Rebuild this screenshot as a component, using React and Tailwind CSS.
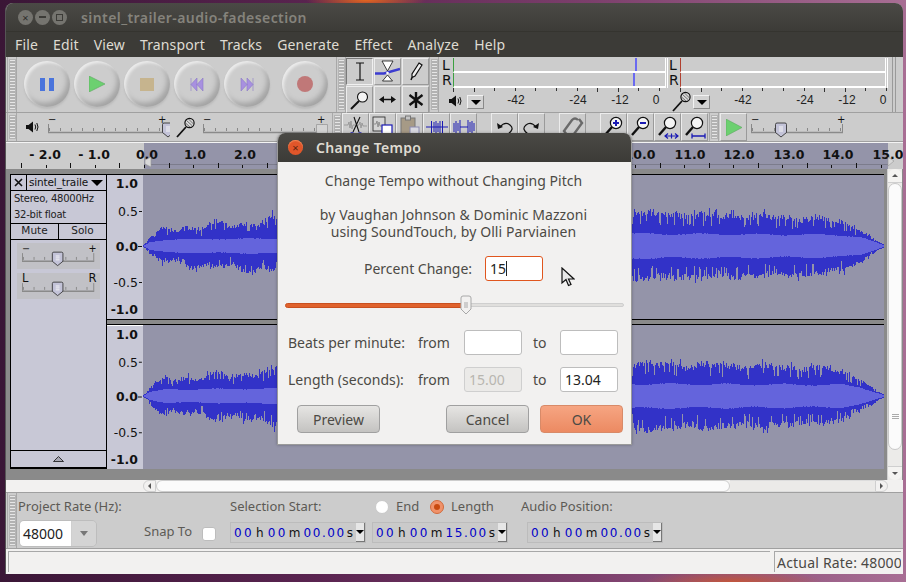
import React from 'react';

const MENUS = ['File', 'Edit', 'View', 'Transport', 'Tracks', 'Generate', 'Effect', 'Analyze', 'Help'];

// amplitude envelopes, x is in track pixels (0 = left edge of wave area)
const OUTER = [[0, 0], [6, 10], [22, 22], [60, 25], [100, 29], [130, 31], [210, 34], [480, 37], [560, 35], [660, 32], [698, 28], [718, 17], [740, 1]];
const INNER = [[0, 0], [6, 4], [22, 7], [130, 8], [210, 12], [490, 13], [698, 12], [718, 9], [740, 1]];

function lerp(pts, x) {
  for (let i = 1; i < pts.length; i++) {
    if (x <= pts[i][0]) {
      const [x0, y0] = pts[i - 1];
      const [x1, y1] = pts[i];
      return y0 + ((y1 - y0) * (x - x0)) / (x1 - x0);
    }
  }
  return 0;
}

function wavePaths(seed) {
  let s = seed;
  const rnd = () => {
    s = (s * 16807) % 2147483647;
    return s / 2147483647;
  };
  const side = (o, x, phase) => {
    const slow = 0.5 + 0.5 * Math.sin(x / 6 + phase) * Math.sin(x / 19 + phase * 2);
    const weight = x < 140 ? 0.35 : 0.14;
    let v = o * (0.84 - weight + weight * slow + rnd() * 0.2);
    const r = rnd();
    if (r > 0.92) v *= 1.13;
    else if (r < 0.14) v *= 0.7;
    return v;
  };
  let outer = '';
  let inner = '';
  for (let x = 0; x < 741; x++) {
    const o = lerp(OUTER, x);
    const i = lerp(INNER, x);
    const slowI = 0.93 + 0.07 * Math.sin(x / 9 + seed);
    const iu = i * slowI * (0.97 + rnd() * 0.06);
    const id = i * slowI * (0.97 + rnd() * 0.06);
    const up = Math.max(side(o, x, seed % 7), iu + 1);
    const down = Math.max(side(o, x, seed % 5 + 2), id + 1);
    outer += `M${x + 0.5} ${71 - up}V${71 + down}`;
    inner += `M${x + 0.5} ${71 - iu}V${71 + id}`;
  }
  return { outer, inner };
}

function Gripper({ className = '' }) {
  return (
    <div className={`w-[10px] shrink-0 flex justify-center py-[2px] bg-[#cccccc] border-r border-[#a8a8a8] border-l ${className}`}>
      <div className="w-[7px] h-full border border-[#b4b4b4] bg-[repeating-linear-gradient(to_bottom,#e6e6e6_0px,#e6e6e6_1px,#b2b2b2_1px,#b2b2b2_3px)]" />
    </div>
  );
}

function RoundBtn({ className = '', children }) {
  return (
    <div className={`w-[46px] h-[46px] rounded-full shrink-0 flex items-center justify-center bg-[#cdcdcd] shadow-[inset_2px_2px_3px_#ececec,inset_-3px_-4px_5px_#a4a4a4,0_2px_2px_#bbbbbb] ${className}`}>
      {children}
    </div>
  );
}

function Tool({ active, className = '', children }) {
  return (
    <div className={`w-[27px] h-[27px] flex items-center justify-center border overflow-hidden ${active ? 'border-t-[#7a7a7a] border-l-[#7a7a7a] border-r-[#f0f0f0] border-b-[#f0f0f0]' : 'border-t-[#ececec] border-l-[#ececec] border-r-[#9a9a9a] border-b-[#9a9a9a]'} ${className}`}>
      {children}
    </div>
  );
}

function Speaker({ className = '' }) {
  return (
    <svg width="14" height="14" viewBox="0 0 14 14" className={className}>
      <path d="M1 5h2.500L8 1.500v11L3.500 9H1z" fill="#111" />
      <path d="M10 4.500q1.500 2.500 0 5M11.800 3q2.400 4 0 8" fill="none" stroke="#111" strokeWidth="1" />
    </svg>
  );
}

function Mic({ className = '' }) {
  return (
    <svg width="20" height="21" viewBox="0 0 20 21" className={className}>
      <path d="M1 20L10 10" stroke="#111" strokeWidth="1.800" />
      <circle cx="13.500" cy="6" r="4.600" fill="#d8d8d8" stroke="#111" strokeWidth="1.200" />
      <path d="M10.500 3.500l5.500 5M12.500 2l5 5M9.500 6l4.500 4" stroke="#555" strokeWidth="0.800" />
    </svg>
  );
}

function Magnifier({ mark, under }) {
  return (
    <svg width="24" height="24" viewBox="0 0 24 24">
      <path d="M3 20L10 12" stroke="#111" strokeWidth="2.400" />
      <circle cx="14" cy="8" r="5.600" fill="#f4f4f4" stroke="#111" strokeWidth="1.200" />
      {mark === '+' && <path d="M11 8h6M14 5v6" stroke="#1a1ab4" strokeWidth="2" />}
      {mark === '-' && <path d="M11 8h6" stroke="#1a1ab4" strokeWidth="2" />}
      {under === 'fit' && <path d="M9 21h13M12 18.500L9 21l3 2.500M19 18.500l3 2.500-3 2.500M15.500 18.500v5" fill="none" stroke="#1a1ab4" strokeWidth="1.200" />}
      {under === 'project' && <path d="M9 21h13M9 18.500v5M22 18.500v5" fill="none" stroke="#1a1ab4" strokeWidth="1.300" />}
    </svg>
  );
}

function Slider({ width, thumb, dim, left = '−', right = '+', bold }) {
  const ticks = [];
  for (let x = 1; x < width - 1; x += 11) ticks.push(x);
  return (
    <svg width={width + 6} height="30" viewBox={`0 0 ${width + 6} 30`} className="block">
      <g transform="translate(0 3)">
        <text x="0" y="8" fontSize={bold ? 12 : 10} fill="#111" fontFamily="DejaVu Sans">{left}</text>
        <text x={width - 6} y="8" fontSize={bold ? 12 : 10} fill="#111" fontFamily="DejaVu Sans">{right}</text>
        <path d={`M0.500 9v8M${width - 0.5} 9v8`} stroke="#888" strokeWidth="1" />
        {ticks.map(x => <path key={x} d={`M${x + 0.5} 13v3`} stroke="#888" strokeWidth="1" />)}
        <path d={`M0 17.500H${width}`} stroke="#8a8a8a" strokeWidth="1.400" />
        {!dim && <path d={`M${thumb - 5.5} 9.500q0-1.500 1.500-1.500h8q1.500 0 1.500 1.500v8l-5.500 4.500-5.500-4.500z`} fill="#c3c3d8" stroke="#222" strokeWidth="0.800" />}
        {!dim && <path d={`M${thumb - 2} 12h4M${thumb - 2} 14h4M${thumb - 2} 16h4`} stroke="#f4f4f4" strokeWidth="1" />}
        {dim && <path d={`M${thumb - 5.5} 9.500h11v8l-5.500 4.500-5.500-4.500z`} fill="#d4d4d4" stroke="#999" strokeWidth="0.800" />}
      </g>
    </svg>
  );
}

function MeterBar({ label, lineColor, marker }) {
  return (
    <div className="h-[15px] flex">
      <div className="w-[12px] text-[14px] leading-[14px] text-[#111] font-['DejaVu_Sans'] pl-[1px]">{label}</div>
      <div className="flex-1 relative border-b-2 border-white border-l-[1.5px]" style={{ borderLeftColor: lineColor }}>
        {marker != null && <div className="absolute top-0 bottom-0 w-[2px] bg-[#6a6af0]" style={{ left: marker }} />}
      </div>
      <div className="w-[3px] border-x border-white" />
    </div>
  );
}

function MeterScale({ labels, width }) {
  const ticks = [];
  for (let x = 0; x <= 10; x++) ticks.push(Math.round((x * (width - 1)) / 10));
  return (
    <svg width={width} height="24" viewBox={`0 0 ${width} 24`} className="block absolute left-[12px] top-0">
      {ticks.map(x => <path key={x} d={`M${x + 0.5} 0v${x % 3 === 0 ? 4 : 3}`} stroke="#333" strokeWidth="1" />)}
      {labels.map(([t, x]) => (
        <text key={t} x={x} y="16" textAnchor="middle" fontSize="12" fill="#222" fontFamily="Liberation Sans">{t}</text>
      ))}
    </svg>
  );
}

function DropBtn({ className = '' }) {
  return (
    <div className={`w-[17px] h-[14px] flex items-center justify-center bg-[#d2d2d2] border border-t-[#f2f2f2] border-l-[#f2f2f2] border-r-[#8a8a8a] border-b-[#8a8a8a] ${className}`}>
      <div className="w-0 h-0 border-x-[5px] border-x-transparent border-t-[5px] border-t-black" />
    </div>
  );
}

function TimeBox({ value }) {
  const [h, m, s] = value;
  return (
    <div className="w-[136px] h-[21px] shrink-0 flex items-center border border-[#bcbcbc] bg-[#cacaca] pl-[3px] font-['DejaVu_Sans'] text-[12px] text-[#111] whitespace-nowrap">
      <span className="text-[#0000c8] tracking-[2.4px]">{h}</span><span className="ml-[2px] mr-[4px]">h</span>
      <span className="text-[#0000c8] tracking-[2.4px]">{m}</span><span className="ml-[1px] mr-[3px]">m</span>
      <span className="text-[#0000c8] tracking-[1.6px]">{s}</span><span className="ml-[1px]">s</span>
      <div className="ml-auto w-[9px] h-[19px] bg-[#e6e6e6] border-r border-b border-[#777] flex items-center justify-center">
        <div className="w-0 h-0 border-x-[4px] border-x-transparent border-t-[4px] border-t-black" />
      </div>
    </div>
  );
}

function VRuler({ topLine }) {
  const items = [['1.0', 13, true], ['0.5', 41, false], ['0.0', 76, true], ['-0.5', 112, false], ['-1.0', 139, true]];
  return (
    <svg width="36" height="144" viewBox="0 0 36 144" className={`block shrink-0 bg-[#c8c8d6] ${topLine ? 'border-t border-white' : ''}`}>
      {items.map(([t, y, b]) => (
        <text key={t} x="31" y={y} textAnchor="end" fontSize="12.500" fontWeight={b ? 700 : 400} fill="#111" fontFamily="DejaVu Sans">{t}</text>
      ))}
      <path d="M32 36.500h3M31 71.500h4M32 107.500h3" stroke="#111" strokeWidth="1" />
    </svg>
  );
}

function Wave({ seed }) {
  const { outer, inner } = wavePaths(seed);
  return (
    <svg width="741" height="144" viewBox="0 0 741 144" className="block flex-1 bg-[#9494a9]" shapeRendering="crispEdges">
      <path d={outer} stroke="#3232c8" strokeWidth="1" fill="none" />
      <path d={inner} stroke="#6464dc" strokeWidth="1" fill="none" />
    </svg>
  );
}

function TopRuler() {
  const labels = [['- 2.0', 45], ['- 1.0', 94], ['0.0', 147], ['1.0', 195], ['2.0', 245], ['10.0', 640], ['11.0', 690], ['12.0', 739], ['13.0', 789], ['14.0', 838], ['15.0', 888]];
  const ticks = [];
  for (let i = -5; i <= 31; i++) ticks.push(Math.round(144 + i * 24.55));
  return (
    <svg width="898" height="27" viewBox="0 0 898 27" className="block">
      <rect x="0" y="0" width="898" height="27" fill="#cccccc" />
      <rect x="138" y="1" width="744" height="26" fill="#9494a9" />
      <rect x="0" y="0" width="898" height="1" fill="#f4f4f4" />
      {labels.map(([t, x]) => (
        <text key={t} x={x - 6} y="17" textAnchor="middle" fontSize="12.500" fontWeight="700" fill="#111" fontFamily="DejaVu Sans">{t}</text>
      ))}
      <path d="M138 22.500H882" stroke="#7c7c8c" strokeWidth="1" />
      {ticks.map((x, i) => <path key={x} d={`M${x - 5.5} ${i % 2 ? 23 : 21}V26`} stroke="#111" strokeWidth="1" />)}
      <path d="M139 18l6-3v10l-6-3zM882 15l6 4-6 5z" fill="#d8d8d8" stroke="#999" strokeWidth="0.600" />
    </svg>
  );
}

export default function App() {
  return (
    <div className="relative w-[906px] h-[582px] overflow-hidden pt-[3px] pl-[5px] pr-[3px] pb-[8px] font-['Noto_Sans',sans-serif] bg-[radial-gradient(ellipse_60px_10px_at_366px_0px,#e5661e,transparent),radial-gradient(ellipse_90px_12px_at_733px_582px,#c2563c,transparent),linear-gradient(to_right,#3a1636_0%,#5a2450_35%,#7c3f6c_65%,#a86e94_100%)]">
      <div className="w-[898px] h-[571px] flex flex-col rounded-t-[8px] overflow-hidden bg-[#cccccc] border-l border-[#555]">
        {/* Title bar */}
        <div className="h-[29px] shrink-0 flex items-center bg-[linear-gradient(to_bottom,#4a4945,#3c3b37)] pl-[12px] border-b border-[#35342f]">
          <div className="w-[15px] h-[15px] rounded-full bg-[#75746f] flex items-center justify-center text-[11px] leading-none text-[#2e2d2a]">×</div>
          <div className="w-[15px] h-[15px] rounded-full bg-[#75746f] ml-[2px] flex items-center justify-center"><div className="w-[7px] h-[2px] bg-[#3c3b37]" /></div>
          <div className="w-[15px] h-[15px] rounded-full bg-[#75746f] ml-[2px] flex items-center justify-center"><div className="w-[7px] h-[7px] border border-[#3c3b37]" /></div>
          <div className="ml-[14px] text-[14px] font-semibold text-[#85837c] tracking-[0.42px]">sintel_trailer-audio-fadesection</div>
        </div>

        {/* Menu */}
        <div className="h-[25px] shrink-0 flex items-center bg-[#3c3b37] text-[14px] text-[#dfdbd2] pl-[9px] gap-[15px] tracking-[0.15px]">
          {MENUS.map(m => <span key={m}>{m}</span>)}
        </div>

        {/* Toolbar row 1 */}
        <div className="h-[56px] shrink-0 flex border-b border-[#a0a0a0] bg-[#cccccc]">
          <Gripper className="ml-[1px]" />
          <div className="w-[319px] flex items-center pl-[7px] gap-[4px] pb-[1px]">
            <RoundBtn>
              <svg width="14" height="13" viewBox="0 0 14 13"><path d="M0 0h5v13H0zM9 0h5v13H9z" fill="#4a74dc" /></svg>
            </RoundBtn>
            <RoundBtn>
              <svg width="16" height="16" viewBox="0 0 16 16"><path d="M0 0l16 8-16 8z" fill="#6cd070" stroke="#5ca860" strokeWidth="0.600" /></svg>
            </RoundBtn>
            <RoundBtn>
              <svg width="14" height="13" viewBox="0 0 14 13"><rect width="14" height="13" fill="#c6b48e" /></svg>
            </RoundBtn>
            <RoundBtn>
              <svg width="14" height="13" viewBox="0 0 14 13"><path d="M1 0v13M7 0L1 6.500 7 13zM13 0L7 6.500 13 13z" fill="#a890e0" stroke="#8a78c8" strokeWidth="0.600" /></svg>
            </RoundBtn>
            <RoundBtn>
              <svg width="14" height="13" viewBox="0 0 14 13"><path d="M13 0v13M7 0l6 6.500L7 13zM1 0l6 6.500L1 13z" fill="#a890e0" stroke="#8a78c8" strokeWidth="0.600" /></svg>
            </RoundBtn>
            <RoundBtn className="ml-[8px]">
              <div className="w-[16px] h-[16px] rounded-full bg-[#c07878]" />
            </RoundBtn>
          </div>
          <Gripper />
          <div className="w-[83px] grid grid-cols-3 grid-rows-[27px_27px] shrink-0 gap-x-px gap-y-px pt-px">
            <Tool active>
              <svg width="12" height="19" viewBox="0 0 12 19"><path d="M2 1h8M2 18h8M6 1v17" stroke="#111" strokeWidth="1.200" fill="none" /></svg>
            </Tool>
            <Tool>
              <svg width="25" height="25" viewBox="0 0 25 25" className="shrink-0">
                <path d="M7 2h11l-5.500 10zM7.500 22h10l-5-6z" fill="#fff" stroke="#111" strokeWidth="0.800" />
                <path d="M0 14.500h9L25 10" fill="none" stroke="#3c3cd0" strokeWidth="2.400" />
                <circle cx="12.500" cy="14" r="1.300" fill="#fff" />
              </svg>
            </Tool>
            <Tool>
              <svg width="14" height="19" viewBox="0 0 14 19"><path d="M10 1l3 2-7 11-3 1.500L3 12z" fill="#f0f0f0" stroke="#111" strokeWidth="1.200" /><path d="M3 15.500L2 18" stroke="#111" strokeWidth="1.500" /></svg>
            </Tool>
            <Tool>
              <svg width="20" height="20" viewBox="0 0 20 20"><path d="M1 19l8-8" stroke="#111" strokeWidth="2" /><circle cx="12.500" cy="7" r="5" fill="#f4f4f4" stroke="#111" strokeWidth="1.100" /></svg>
            </Tool>
            <Tool>
              <svg width="17" height="9" viewBox="0 0 17 9"><path d="M3 4.500h11" stroke="#111" strokeWidth="1.500" /><path d="M0 4.500L5 1v7zM17 4.500L12 1v7z" fill="#111" /></svg>
            </Tool>
            <Tool>
              <svg width="16" height="16" viewBox="0 0 16 16"><path d="M8 0v16M1.500 3l13 10M14.500 3l-13 10" stroke="#111" strokeWidth="2.400" /></svg>
            </Tool>
          </div>
          <Gripper />
          <div className="flex-1 flex relative pl-[2px]">
            <div className="w-[227px] relative flex flex-col pt-[1px]">
              <MeterBar label="L" lineColor="#3ca040" marker={181} />
              <MeterBar label="R" lineColor="#3ca040" marker={179} />
              <div className="relative flex-1">
                <MeterScale width={207} labels={[['-42', 63], ['-24', 125], ['-12', 167], ['0', 203]]} />
                <Speaker className="absolute left-[7px] top-[6px]" />
                <DropBtn className="absolute left-[26px] top-[7px]" />
              </div>
            </div>
            <div className="w-[220px] relative flex flex-col pt-[1px]">
              <MeterBar label="L" lineColor="#b04030" />
              <MeterBar label="R" lineColor="#b04030" />
              <div className="relative flex-1">
                <MeterScale width={207} labels={[['-42', 63], ['-24', 125], ['-12', 167], ['0', 203]]} />
                <Mic className="absolute left-[4px] top-[3px]" />
                <DropBtn className="absolute left-[25px] top-[7px]" />
              </div>
            </div>
            <div className="w-[4px] ml-[4px] border-x border-[#9a9a9a]" />
          </div>
        </div>

        {/* Toolbar row 2 */}
        <div className="h-[29px] shrink-0 flex items-center bg-[#cccccc] border-b border-[#a0a0a0]">
          <Gripper className="ml-[1px] h-full" />
          <Speaker className="ml-[8px] shrink-0" />
          <div className="ml-[9px] shrink-0"><Slider width={116} thumb={120} /></div>
          <Mic className="ml-[6px] shrink-0" />
          <div className="ml-[7px] shrink-0"><Slider width={120} thumb={119} dim /></div>
          <Gripper className="ml-[3px] h-full" />
          <div className="flex h-full shrink-0">
            <Tool className="!h-full">
              <svg width="24" height="24" viewBox="0 0 24 24">
                <path d="M0 10h4l1-3 1 6 1-7 1 8 1-4h6l1-3 1 6 1-5 1 3h4" fill="none" stroke="#888" strokeWidth="0.700" />
                <path d="M16 2L9 17M10 2l5 15" stroke="#111" strokeWidth="1.100" />
                <circle cx="8" cy="20" r="2.400" fill="none" stroke="#2222c0" />
                <circle cx="16" cy="20" r="2.400" fill="none" stroke="#2222c0" />
              </svg>
            </Tool>
            <Tool className="!h-full">
              <svg width="24" height="24" viewBox="0 0 24 24">
                <rect x="2" y="2" width="12" height="14" fill="#d4d4d4" stroke="#222" strokeWidth="0.800" />
                <path d="M3 9h2l1-3 1 6 1-5 1 4h3" fill="none" stroke="#777" strokeWidth="0.700" />
                <rect x="11" y="10" width="10" height="12" fill="#fff" stroke="#1a1ab4" strokeWidth="1.200" />
              </svg>
            </Tool>
            <Tool className="!h-full">
              <svg width="24" height="24" viewBox="0 0 24 24">
                <rect x="3" y="3" width="14" height="18" fill="#a69a86" stroke="#777" />
                <rect x="7.500" y="1" width="5" height="4" fill="#c4c4c4" stroke="#777" />
                <rect x="12" y="12" width="9" height="10" fill="#d8d8e0" stroke="#8a8ab0" />
              </svg>
            </Tool>
            <Tool className="!h-full">
              <svg width="24" height="24" viewBox="0 0 24 24"><path d="M1 12h22M6.500 6v13M17.500 6v13M9 7v10M11 6v13M13 8v9M15 6v12" stroke="#1a1ab4" strokeWidth="1" /></svg>
            </Tool>
            <Tool className="!h-full">
              <svg width="24" height="24" viewBox="0 0 24 24"><path d="M2 8v9M4 6v12M6 8v8M8 5v14M8 12h8M16 5v14M18 7v10M20 6v12M22 8v8" stroke="#1a1ab4" strokeWidth="1" /></svg>
            </Tool>
          </div>
          <div className="w-[14px] shrink-0" />
          <div className="flex h-full shrink-0">
            <Tool className="!h-full"><svg width="17" height="15" viewBox="0 0 17 15"><path d="M4 7q5-6 10-2t-2 9" fill="none" stroke="#111" strokeWidth="1.200" /><path d="M1 3l1 6 5-2z" fill="#111" /></svg></Tool>
            <Tool className="!h-full"><svg width="17" height="15" viewBox="0 0 17 15"><path d="M13 7Q8 1 3 5t2 9" fill="none" stroke="#111" strokeWidth="1.200" /><path d="M16 3l-1 6-5-2z" fill="#111" /></svg></Tool>
          </div>
          <div className="w-[14px] shrink-0" />
          <Tool className="!h-full shrink-0"><svg width="22" height="24" viewBox="0 0 22 24"><path d="M5 20l-3-4 8-11q3-3 6 0M17 4l3 4-8 11q-3 3-6 0" fill="none" stroke="#6a6a6a" strokeWidth="2.400" /></svg></Tool>
          <div className="w-[14px] shrink-0" />
          <div className="flex h-full shrink-0">
            <Tool className="!h-full"><Magnifier mark="+" /></Tool>
            <Tool className="!h-full"><Magnifier mark="-" /></Tool>
            <Tool className="!h-full"><Magnifier under="fit" /></Tool>
            <Tool className="!h-full"><Magnifier under="project" /></Tool>
          </div>
          <Gripper className="ml-[1px] h-full" />
          <Tool className="!h-full ml-[1px] shrink-0">
            <svg width="16" height="17" viewBox="0 0 16 17"><path d="M0 0l16 8.500L0 17z" fill="#6cd070" stroke="#5ca860" strokeWidth="0.600" /></svg>
          </Tool>
          <div className="ml-[4px] shrink-0"><Slider width={92} thumb={30} /></div>
        </div>

        {/* Timeline */}
        <div className="h-[27px] shrink-0"><TopRuler /></div>

        {/* Tracks + vertical scrollbar */}
        <div className="h-[311px] shrink-0 flex bg-[#8a8a8a]">
          <div className="flex-1 pl-[4px] pt-[5px]">
            <div className="flex w-[874px] h-[295px] border-b-2 border-r-2 border-black">
              {/* track panel */}
              <div className="w-[97px] shrink-0 flex flex-col bg-[#c8c8d6] border-x border-t border-black font-['DejaVu_Sans'] text-[10.5px] text-[#222]">
                <div className="flex h-[16px] border-b border-black shrink-0">
                  <div className="w-[16px] border-r border-black flex items-center justify-center">
                    <svg width="9" height="9" viewBox="0 0 9 9"><path d="M1 1l7 7M8 1L1 8" stroke="#111" strokeWidth="1.600" /></svg>
                  </div>
                  <div className="flex-1 flex items-center pl-[2px] text-[#111] overflow-hidden whitespace-nowrap tracking-[-0.15px]">
                    sintel_traile
                    <div className="ml-auto mr-[3px] w-0 h-0 shrink-0 border-x-[6px] border-x-transparent border-t-[6px] border-t-black" />
                  </div>
                </div>
                <div className="h-[33px] shrink-0 border-b border-black pl-[3px] text-[10px] leading-[15.5px] tracking-[-0.25px]">
                  <div>Stereo, 48000Hz</div>
                  <div>32-bit float</div>
                </div>
                <div className="flex h-[16px] shrink-0 border-b border-black text-center leading-[13px]">
                  <div className="flex-1 border-r border-black">Mute</div>
                  <div className="flex-1">Solo</div>
                </div>
                <div className="mx-[6px] mt-[3px] h-[26px] bg-[#c1c1c6] flex items-center pl-[5px]">
                  <Slider width={75} thumb={37} />
                </div>
                <div className="mx-[6px] mt-[4px] h-[26px] bg-[#c1c1c6] flex items-center pl-[5px]">
                  <Slider width={75} thumb={37} left="L" right="R" bold />
                </div>
                <div className="flex-1" />
                <div className="h-[17px] shrink-0 border-t border-black flex items-center justify-center">
                  <svg width="11" height="6" viewBox="0 0 11 6"><path d="M5.500 0.500L10.500 5.500H0.500z" fill="#a8a8b4" stroke="#111" strokeWidth="0.800" /></svg>
                </div>
              </div>
              {/* channels */}
              <div className="flex-1 flex flex-col">
                <div className="h-[145px] flex border-t border-black shrink-0">
                  <VRuler />
                  <Wave seed={1234} />
                </div>
                <div className="h-[5px] shrink-0 border-t border-black bg-[#8a8a8a]" />
                <div className="flex-1 flex border-t border-black">
                  <VRuler topLine />
                  <Wave seed={98765} />
                </div>
              </div>
            </div>
          </div>
          {/* vertical scrollbar */}
          <div className="w-[15px] shrink-0 flex flex-col items-center bg-[#ecebe9] border-l border-[#d0d0d0] mr-[1px]">
            <div className="w-full h-[14px] shrink-0 flex items-center justify-center rounded-t-full border-b border-[#cfcfcf] bg-[#f4f3f1]">
              <div className="w-0 h-0 border-x-[3px] border-x-transparent border-b-[3px] border-b-[#555]" />
            </div>
            <div className="w-full h-[267px] shrink-0 rounded-full bg-[#fbfbfb] border border-[#c8c8c8] flex items-center justify-center">
              <div className="w-[7px] h-[6px] mt-[200px] bg-[repeating-linear-gradient(to_bottom,#aaa_0px,#aaa_1px,transparent_1px,transparent_2px)]" />
            </div>
            <div className="flex-1" />
            <div className="w-full h-[14px] shrink-0 flex items-center justify-center rounded-b-full border-t border-[#cfcfcf] bg-[#f4f3f1]">
              <div className="w-0 h-0 border-x-[3px] border-x-transparent border-t-[3px] border-t-[#555]" />
            </div>
          </div>
        </div>

        {/* Horizontal scrollbar */}
        <div className="h-[13px] shrink-0 flex items-center bg-[#f2f1f0] border-b border-[#a0a0a0] pl-[137px] pr-[15px]">
          <div className="w-[13px] h-[12px] shrink-0 rounded-l-full border border-[#cfcfcf] flex items-center justify-center">
            <div className="w-0 h-0 border-y-[3px] border-y-transparent border-r-[3px] border-r-[#555]" />
          </div>
          <div className="w-[574px] h-[12px] shrink-0 rounded-full bg-[#fbfbfb] border border-[#cdcdcd]" />
          <div className="flex-1 h-[12px] bg-[#ebeae8] border-y border-[#dcdcdc]" />
          <div className="w-[13px] h-[12px] shrink-0 rounded-r-full border border-[#cfcfcf] flex items-center justify-center">
            <div className="w-0 h-0 border-y-[3px] border-y-transparent border-l-[3px] border-l-[#555]" />
          </div>
        </div>

        {/* Selection bar */}
        <div className="h-[56px] shrink-0 flex bg-[#cccccc] border-b border-[#a0a0a0] text-[13px] text-[#5c5a55]">
          <Gripper className="ml-[1px]" />
          <div className="w-[126px] shrink-0 flex flex-col pl-[1px]">
            <div className="h-[27px] flex items-center whitespace-nowrap">Project Rate (Hz):</div>
            <div className="w-[78px] h-[27px] ml-[1px] flex rounded-[5px] border border-[#bdbdbd] overflow-hidden">
              <div className="w-[52px] bg-white text-[#222] text-[14px] flex items-center pl-[3px] border-r border-[#cfcfcf]">48000</div>
              <div className="flex-1 bg-[#d4d4d4] flex items-center justify-center">
                <div className="w-0 h-0 border-x-[4px] border-x-transparent border-t-[5px] border-t-[#777]" />
              </div>
            </div>
          </div>
          <div className="w-[87px] shrink-0 flex items-end pb-[7px] gap-[10px] pl-[1px]">
            <span className="whitespace-nowrap">Snap To</span>
            <div className="w-[14px] h-[14px] mb-0 bg-white rounded-[3px] border border-[#bdbdbd] shrink-0" />
          </div>
          <div className="flex-1 flex flex-col">
            <div className="h-[27px] flex items-center whitespace-nowrap">
              <span className="w-[145px]">Selection Start:</span>
              <div className="w-[14px] h-[14px] rounded-full bg-white border border-[#c8c8c8]" />
              <span className="ml-[7px] w-[34px]">End</span>
              <div className="w-[14px] h-[14px] rounded-full bg-[#f0926a] border border-[#d06a3c] flex items-center justify-center">
                <div className="w-[6px] h-[6px] rounded-full bg-[#c84a10]" />
              </div>
              <span className="ml-[7px] w-[70px]">Length</span>
              <span>Audio Position:</span>
            </div>
            <div className="flex gap-[6px] mt-[2px]">
              <TimeBox value={['00', '00', '00.00']} />
              <TimeBox value={['00', '00', '15.00']} />
              <div className="w-[7px]" />
              <TimeBox value={['00', '00', '00.00']} />
            </div>
          </div>
        </div>

        {/* Status bar */}
        <div className="flex-1 flex bg-[#f2f1f0] pt-[2px] pl-[2px] pr-[2px] text-[14px] text-[#4a4845]">
          <div className="flex-1 border-t border-l border-[#a8a8a8] h-[21px]" />
          <div className="w-[127px] ml-[4px] border-t border-l border-[#a8a8a8] h-[21px] pl-[2px] leading-[21px] whitespace-nowrap overflow-hidden tracking-[0.2px]">Actual Rate: 48000</div>
        </div>
      </div>

      {/* Dialog */}
      <div className="absolute left-[277px] top-[133px] w-[355px] h-[312px] flex flex-col rounded-t-[8px] overflow-hidden bg-[#f2f1f0] border-b border-x border-[#9a9a9a] text-[#4c4a45] text-[14px] shadow-[0_0_3px_rgba(0,0,0,0.3)]">
        <div className="h-[29px] shrink-0 flex items-center bg-[linear-gradient(to_bottom,#4a4945,#3c3b37)] pl-[10px]">
          <div className="w-[15px] h-[15px] rounded-full bg-[#e0562a] flex items-center justify-center text-[11px] leading-none text-[#5a2410] shadow-[inset_0_1px_1px_#f08a5a]">×</div>
          <div className="ml-[13px] text-[14px] font-semibold text-[#dfdbd2] tracking-[0.3px]">Change Tempo</div>
        </div>
        <div className="text-center mt-[10px] leading-[18px] pr-[2px] tracking-[0.03px]">Change Tempo without Changing Pitch</div>
        <div className="text-center mt-[16px] leading-[17px] pr-[2px] tracking-[0.08px]">
          <div>by Vaughan Johnson &amp; Dominic Mazzoni</div>
          <div>using SoundTouch, by Olli Parviainen</div>
        </div>
        <div className="flex items-center mt-[16px] h-[25px]">
          <span className="ml-[86px]">Percent Change:</span>
          <div className="ml-[13px] w-[58px] h-[25px] bg-white border border-[#e0561e] rounded-[3px] flex items-center pl-[4px] text-[#222]">
            15<span className="w-px h-[15px] bg-[#222]" />
          </div>
        </div>
        <div className="relative mt-[13px] mx-[7px] h-[22px] flex items-center">
          <div className="w-[181px] h-[5px] rounded-l-full bg-[#e0622c] border border-[#c85020]" />
          <div className="flex-1 h-[4px] rounded-r-full bg-[#e0dfdd] border border-[#cfcfcf]" />
          <div className="absolute left-[175px] top-[1px]">
            <svg width="12" height="20" viewBox="0 0 12 20">
              <path d="M1 3q0-2 2-2h6q2 0 2 2v11l-5 5-5-5z" fill="#f2f1f0" stroke="#a8a8a8" />
              <path d="M4 8h4M4 10h4M4 12h4" stroke="#aaa" strokeWidth="1" />
            </svg>
          </div>
        </div>
        <div className="flex items-center mt-[14px] h-[25px] pl-[10px]">
          <span className="w-[130px] whitespace-nowrap">Beats per minute:</span>
          <span className="w-[46px]">from</span>
          <div className="w-[58px] h-[25px] bg-white border border-[#bdbdbd] rounded-[3px]" />
          <span className="ml-[11px] w-[27px]">to</span>
          <div className="w-[58px] h-[25px] bg-white border border-[#bdbdbd] rounded-[3px]" />
        </div>
        <div className="flex items-center mt-[12px] h-[25px] pl-[10px]">
          <span className="w-[130px] whitespace-nowrap">Length (seconds):</span>
          <span className="w-[46px]">from</span>
          <div className="w-[58px] h-[25px] bg-[#ebeae8] border border-[#cfcfcf] rounded-[3px] text-[#b8b6b0] flex items-center pl-[4px]">15.00</div>
          <span className="ml-[11px] w-[27px]">to</span>
          <div className="w-[58px] h-[25px] bg-white border border-[#bdbdbd] rounded-[3px] text-[#222] flex items-center pl-[4px]">13.04</div>
        </div>
        <div className="flex mt-[13px] h-[28px] pl-[19px]">
          <div className="w-[83px] rounded-[4px] border border-[#a0a0a0] bg-[linear-gradient(to_bottom,#e6e5e3,#c4c3c1)] flex items-center justify-center">Preview</div>
          <div className="ml-[66px] w-[83px] rounded-[4px] border border-[#a0a0a0] bg-[linear-gradient(to_bottom,#e6e5e3,#c4c3c1)] flex items-center justify-center">Cancel</div>
          <div className="ml-[11px] w-[83px] rounded-[4px] border border-[#d88a68] bg-[linear-gradient(to_bottom,#f6a582,#ec8a62)] flex items-center justify-center">OK</div>
        </div>
      </div>

      {/* Mouse pointer */}
      <svg width="14" height="21" viewBox="0 0 14 21" className="absolute left-[561px] top-[267px]">
        <path d="M1 1v15l4-3.500 2.500 6 2.500-1-2.500-5.500H13z" fill="#e8e8e8" stroke="#111" strokeWidth="1.200" />
      </svg>
    </div>
  );
}
